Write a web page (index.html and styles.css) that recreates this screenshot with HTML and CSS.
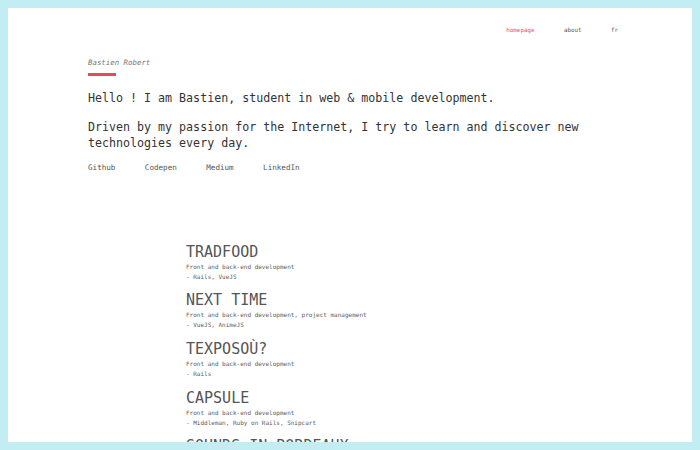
FILE: index.html
```html
<!DOCTYPE html>
<html lang="en">
<head>
<meta charset="utf-8">
<title>Bastien Robert</title>
<link rel="stylesheet" href="styles.css">
</head>
<body>
<div class="panel">
  <nav class="nav">
    <a class="nav-item active" href="#">homepage</a>
    <a class="nav-item" href="#">about</a>
    <a class="nav-item" href="#">fr</a>
  </nav>
  <header class="intro">
    <p class="name">Bastien Robert</p>
    <div class="bar"></div>
    <p class="hello">Hello ! I am Bastien, student in web &amp; mobile development.</p>
    <p class="driven">Driven by my passion for the Internet, I try to learn and discover new technologies every day.</p>
    <div class="links">
      <a href="#">Github</a>
      <a href="#">Codepen</a>
      <a href="#">Medium</a>
      <a href="#">LinkedIn</a>
    </div>
  </header>
  <section class="projects">
    <div class="project">
      <h2 class="title">TRADFOOD</h2>
      <p class="desc">Front and back-end development</p>
      <p class="desc">- Rails, VueJS</p>
    </div>
    <div class="project">
      <h2 class="title">NEXT TIME</h2>
      <p class="desc">Front and back-end development, project management</p>
      <p class="desc">- VueJS, AnimeJS</p>
    </div>
    <div class="project">
      <h2 class="title">TEXPOSOÙ?</h2>
      <p class="desc">Front and back-end development</p>
      <p class="desc">- Rails</p>
    </div>
    <div class="project">
      <h2 class="title">CAPSULE</h2>
      <p class="desc">Front and back-end development</p>
      <p class="desc">- Middleman, Ruby on Rails, Snipcart</p>
    </div>
    <div class="project">
      <h2 class="title">SOUNDS IN BORDEAUX</h2>
      <p class="desc">Front-end development</p>
      <p class="desc">- Middleman</p>
    </div>
  </section>
</div>
</body>
</html>
```
FILE: styles.css
```css
html, body {
  margin: 0;
  padding: 0;
  height: 450px;
  overflow: hidden;
}
body {
  background: #c2edf2;
  padding: 8px;
  box-sizing: border-box;
  font-family: "DejaVu Sans Mono", monospace;
}
.panel {
  background: #ffffff;
  height: 434px;
  overflow: hidden;
  padding: 17px 74px 0 80px;
  box-sizing: border-box;
}
a {
  text-decoration: none;
}
p, h2 {
  margin: 0;
}
.nav {
  display: flex;
  justify-content: flex-end;
  gap: 29.3px;
  font-size: 5.9px;
  line-height: 10px;
}
.nav-item {
  color: #5a5a5a;
}
.nav-item.active {
  color: #e5526a;
}
.intro {
  max-width: 540px;
  color: #333333;
}
.name {
  margin-top: 23.4px;
  font-size: 7.4px;
  line-height: 10px;
  font-style: italic;
  color: #777777;
}
.bar {
  margin-top: 5.1px;
  width: 28px;
  height: 2.5px;
  background: #e14a5f;
}
.hello {
  margin-top: 14px;
  font-size: 11.65px;
  line-height: 16px;
}
.driven {
  margin-top: 13px;
  font-size: 11.65px;
  line-height: 16px;
}
.links {
  margin-top: 12.2px;
  display: flex;
  gap: 29.4px;
  font-size: 7.6px;
  line-height: 10px;
}
.links a {
  color: #555555;
}
.projects {
  margin-top: 69.7px;
  margin-left: 98px;
  color: #555555;
}
.project {
  margin-bottom: 9.6px;
}
.title {
  font-size: 15px;
  line-height: 19px;
  font-weight: normal;
  color: #555555;
}
.desc {
  font-size: 6px;
  line-height: 10px;
  color: #5c5c5c;
}
```
